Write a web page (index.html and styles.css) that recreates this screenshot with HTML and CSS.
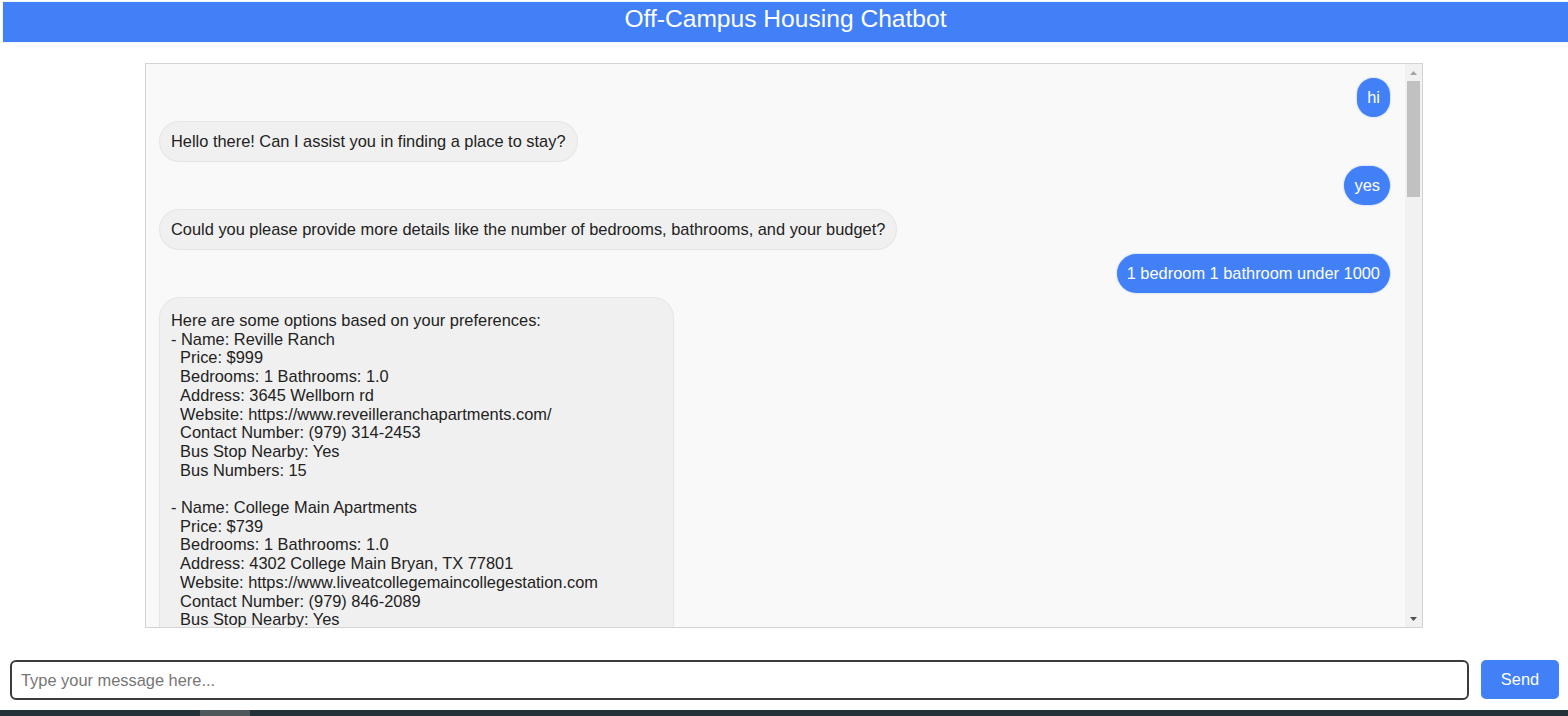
FILE: index.html
```html
<!DOCTYPE html>
<html lang="en">
<head>
<meta charset="utf-8">
<title>Off-Campus Housing Chatbot</title>
<link rel="stylesheet" href="styles.css">
</head>
<body>
<header class="header">Off-Campus Housing Chatbot</header>
<main class="chat">
  <div class="messages">
    <div class="msg user">hi</div>
    <div class="msg bot">Hello there! Can I assist you in finding a place to stay?</div>
    <div class="msg user">yes</div>
    <div class="msg bot">Could you please provide more details like the number of bedrooms, bathrooms, and your budget?</div>
    <div class="msg user">1 bedroom 1 bathroom under 1000</div>
    <div class="msg bot long">Here are some options based on your preferences:
- Name: Reville Ranch
  Price: $999
  Bedrooms: 1 Bathrooms: 1.0
  Address: 3645 Wellborn rd
  Website: https://www.reveilleranchapartments.com/
  Contact Number: (979) 314-2453
  Bus Stop Nearby: Yes
  Bus Numbers: 15

- Name: College Main Apartments
  Price: $739
  Bedrooms: 1 Bathrooms: 1.0
  Address: 4302 College Main Bryan, TX 77801
  Website: https://www.liveatcollegemaincollegestation.com
  Contact Number: (979) 846-2089
  Bus Stop Nearby: Yes</div>
  </div>
  <div class="scrollbar">
    <div class="sb-btn">
      <svg width="7" height="4" viewBox="0 0 7 4"><path d="M0 4L3.5 0L7 4Z" fill="#a3a3a3"/></svg>
    </div>
    <div class="sb-track"><div class="sb-thumb"></div></div>
    <div class="sb-btn">
      <svg width="7" height="4" viewBox="0 0 7 4"><path d="M0 0L7 0L3.5 4Z" fill="#505050"/></svg>
    </div>
  </div>
</main>
<form class="composer">
  <input class="input" type="text" placeholder="Type your message here...">
  <button class="send" type="button">Send</button>
</form>
<div class="taskbar"><div class="taskbar-item"></div></div>
</body>
</html>
```
FILE: styles.css
```css
html, body {
  margin: 0;
  padding: 0;
  background: #ffffff;
  font-family: "Liberation Sans", Arial, sans-serif;
  overflow: hidden;
}

.header {
  margin: 2px 0 0 3px;
  height: 40px;
  box-sizing: border-box;
  padding-top: 3px;
  background: #4280f7;
  color: #ffffff;
  font-size: 24.6px;
  text-align: center;
  box-shadow: 0 0 1px rgba(120, 150, 220, 0.6);
}

.chat {
  display: flex;
  width: 1278px;
  height: 565px;
  box-sizing: border-box;
  margin: 21px auto 0;
  border: 1px solid #d3d3d3;
  background: #f9f9f9;
}

.messages {
  flex: 1;
  overflow: hidden;
  display: flex;
  flex-direction: column;
  align-items: flex-start;
  gap: 5px;
  padding: 14px 15px 0 14px;
}

.msg {
  font-size: 16.4px;
  line-height: 19px;
  padding: 10px 11px;
  border-radius: 20px;
  color: #222222;
  white-space: pre-wrap;
}

.user {
  align-self: flex-end;
  background: #4280f7;
  color: #ffffff;
  padding: 10px 10px;
  box-shadow: 0 0 2px rgba(66, 128, 247, 0.5);
}

.bot {
  background: #f0f0f0;
  box-shadow: 0 0 0 1px #e6e6e6, 0 0 3px rgba(0, 0, 0, 0.06);
}

.long {
  width: 513px;
  box-sizing: border-box;
  line-height: 18.7px;
  padding-top: 13px;
  padding-bottom: 30px;
}

.scrollbar {
  width: 17px;
  flex: none;
  display: flex;
  flex-direction: column;
  background: #f1f1f1;
}

.sb-btn {
  height: 17px;
  display: flex;
  align-items: center;
  justify-content: center;
  flex: none;
}

.sb-track {
  flex: 1;
  padding: 0 2px;
}

.sb-thumb {
  height: 116px;
  background: #c1c1c1;
}

.composer {
  display: flex;
  gap: 12px;
  margin: 32px 9px 0 10px;
}

.input {
  flex: 1;
  height: 40px;
  box-sizing: border-box;
  border: 2px solid #3c3c3c;
  border-radius: 6px;
  padding: 0 9px;
  font-family: "Liberation Sans", Arial, sans-serif;
  font-size: 16.4px;
  color: #222222;
  outline: none;
}

.input::placeholder {
  color: #767676;
}

.send {
  width: 78px;
  height: 39px;
  border: none;
  border-radius: 5px;
  background: #4280f7;
  color: #ffffff;
  font-family: "Liberation Sans", Arial, sans-serif;
  font-size: 16.4px;
  padding: 0;
}

.taskbar {
  margin-top: 10px;
  height: 6px;
  background: #25323a;
  padding-left: 200px;
}

.taskbar-item {
  width: 50px;
  height: 6px;
  background: #50575b;
}
```
